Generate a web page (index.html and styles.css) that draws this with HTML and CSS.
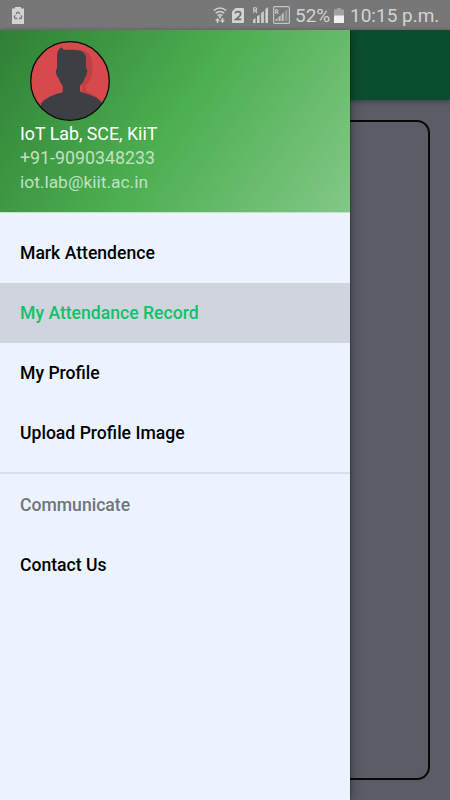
FILE: index.html
```html
<!DOCTYPE html>
<html lang="en">
<head>
    <meta charset="UTF-8">
    <title>Attendance</title>
    <link rel="stylesheet" href="styles.css">
</head>
<body>
    <div class="statusbar">
        <svg class="saver" width="12" height="17" viewBox="0 0 12 17">
            <path fill="#d3d3d3" d="M3 0h6v1.5h3V17H0V1.5h3z"/>
            <path fill="none" stroke="#777" stroke-width="1.4" d="M4.1 7.1 5.2 5.4h1.6l1 1.6M8.8 8.2l.9 1.8-.9 1.5H7M5.3 11.5H3.2L2.3 10l.9-1.8"/>
        </svg>
        <div class="status-icons">
            <svg class="wifi" width="14" height="17" viewBox="0 0 14 17">
                <g fill="none" stroke="#d0d0d0" stroke-width="1.5">
                    <path d="M.8 3.6Q7-1.4 13.2 3.6"/>
                    <path d="M2.8 6.2Q7 2.7 11.2 6.2"/>
                    <path d="M4.7 8.7Q7 6.9 9.3 8.7"/>
                </g>
                <path fill="#d0d0d0" d="M7 8.500l1.500 1.500L7 11.500l-1.500-1.500zM4.500 11 7 13.700H5.300V16H3.700v-2.300H2zM9.500 16 7 13.300h1.700V11h1.600v2.300H12z"/>
            </svg>
            <svg class="sim" width="12" height="15" viewBox="0 0 12 15">
                <path fill="#d3d3d3" d="M3.5 0H11q1 0 1 1v13q0 1-1 1H1q-1 0-1-1V3.5z"/>
                <path fill="none" stroke="#707070" stroke-width="1.7" d="M3.2 5.5Q3.3 3.6 6 3.6q2.7 0 2.7 2.1 0 1.5-2 3.1L3.8 11.4h5.4"/>
            </svg>
            <svg class="signal" width="15" height="16" viewBox="0 0 15 16">
                <path fill="none" stroke="#d0d0d0" stroke-width="1.1" d="M.8 6V.8h1.6q1.4 0 1.4 1.3t-1.4 1.3H.8M2.4 3.4 4 6"/>
                <path fill="#d0d0d0" d="M0 13l2.5-2v5H0zM4 9.5l2.6-2V16H4zM8.2 6l2.6-2v12H8.2zM12.4 2.2 15 0v16h-2.6z"/>
            </svg>
            <svg class="signal-box" width="17" height="18" viewBox="0 0 17 18">
                <rect x=".6" y=".6" width="15.8" height="16.8" rx="1" fill="none" stroke="#c4c4c4" stroke-width="1.2"/>
                <path fill="none" stroke="#d0d0d0" d="M2.7 8V3.6h1.2q1.2 0 1.2 1.1T3.9 5.8H2.7M4 5.8 5.3 8"/>
                <path fill="#c4c4c4" d="M2.5 13.5l2-1.6V15h-2zM5.5 11l2.1-1.7V15H5.5zM8.6 8.4l2.1-1.8V15H8.6z"/>
                <path fill="#999" d="M11.8 5.6 14.4 3v12h-2.6z"/>
            </svg>
            <span class="percent">52%</span>
            <svg class="battery" width="10" height="15" viewBox="0 0 10 15">
                <path fill="#a2a2a2" d="M3 0h4v1.4h3V8H0V1.4h3z"/>
                <path fill="#f0f0f0" d="M0 7.5h10V15H0z"/>
            </svg>
            <span class="clock">10:15 p.m.</span>
        </div>
    </div>
    <div class="screen">
        <div class="toolbar"></div>
        <div class="page">
            <div class="panel"></div>
        </div>
        <nav class="drawer">
            <div class="header">
                <svg class="avatar" width="80" height="80" viewBox="0 0 80 80">
                    <defs>
                        <clipPath id="round"><circle cx="40" cy="40" r="39"/></clipPath>
                    </defs>
                    <circle cx="40" cy="40" r="39" fill="#d64a4b"/>
                    <g clip-path="url(#round)">
                        <path fill="#bf4144" d="M50 9q12 1 12 12v6.500q1.500 3-.7 7.500-1.300 6-5.300 10v5q4 3 9 4.500l8 7-20 3z"/>
                        <path fill="#3c3f44" d="M31.700 6.300 33 8.200Q36 9 43 8.800 56 8.500 56 18v9.300q2 1.200 1 4.200-.5 4-2 4.500-1 5-5 9v5.500q3 1.500 9 3 9 3 12.700 8V80H11V62.500q3-4 9-7 6-2.800 12.700-4.200V45q-3-4-4.700-9-1.400-.5-2-4.500-.5-3 1-4.200V15q0-6.500 4.700-8.700z"/>
                    </g>
                    <circle cx="40" cy="40" r="39.3" fill="none" stroke="#0b0b0b" stroke-width="1.3"/>
                </svg>
                <p class="name">IoT Lab, SCE, KiiT</p>
                <p class="phone">+91-9090348233</p>
                <p class="email">iot.lab@kiit.ac.in</p>
            </div>
            <ul class="menu">
                <li>Mark Attendence</li>
                <li class="active">My Attendance Record</li>
                <li>My Profile</li>
                <li>Upload Profile Image</li>
            </ul>
            <ul class="menu more">
                <li class="title">Communicate</li>
                <li>Contact Us</li>
            </ul>
        </nav>
    </div>
</body>
</html>
```
FILE: styles.css
```css
* {
    box-sizing: border-box;
    margin: 0;
    padding: 0;
}
body {
    display: flex;
    flex-direction: column;
    height: 100vh;
    overflow: hidden;
    font-family: Roboto, "Liberation Sans", sans-serif;
}

.statusbar {
    display: flex;
    justify-content: space-between;
    height: 30px;
    padding: 0 12px;
    background: #777;
    color: #d3d3d3;
    font-size: 19px;
    line-height: 31px;
}
.status-icons {
    display: flex;
}
.saver {
    margin-top: 7px;
}
.wifi {
    margin: 7px 5px 0 0;
}
.sim {
    margin: 8px 9px 0 0;
}
.signal {
    margin: 7px 5px 0 0;
}
.signal-box {
    margin: 6px 5px 0 0;
}
.percent {
    width: 39px;
}
.battery {
    margin: 8px 6px 0 0;
}
.clock {
    width: 88px;
    white-space: nowrap;
}

.screen {
    position: relative;
    display: flex;
    flex-direction: column;
    flex: 1;
    background: #5a5d65;
}
.toolbar {
    height: 70px;
    background: #0a4e2f;
    box-shadow: 0 1px 5px rgba(0,0,0, 0.4);
}
.page {
    display: flex;
    flex: 1;
    padding: 20px;
}
.panel {
    flex: 1;
    border: 2px solid #080808;
    border-radius: 13px;
}

/* drawer slides over the page */
.drawer {
    position: absolute;
    top: 0;
    bottom: 0;
    left: 0;
    width: 350px;
    background: #ecf3ff;
    box-shadow: 0 0 12px rgba(0,0,0, 0.45), 0 0 1px #000;
    clip-path: inset(0 -30px 0 0);
}
.header {
    height: 183px;
    padding: 11px 20px 0;
    border-bottom: 1px solid #c5e0d0;
    background: linear-gradient(125deg, #2f8035, #4caf50, #83c887);
    color: #c1e1c3;
    font-size: 17.8px;
    line-height: 24px;
}
.avatar {
    display: block;
    margin: 0 0 1px 10px;
}
.header .name {
    color: #fff;
}
.header .email {
    font-size: 17.4px;
}
.menu {
    list-style: none;
    padding: 10px 0 9px;
    font-size: 17.6px;
    font-weight: 500;
    line-height: 61px;
}
.menu li {
    height: 60px;
    padding-left: 20px;
}
.menu .active {
    background: #d0d4df;
    color: #11c266;
}
.menu.more {
    border-top: 2px solid #d8deea;
    padding: 1px 0;
    line-height: 60px;
}
.menu .title {
    color: #717479;
}
```
